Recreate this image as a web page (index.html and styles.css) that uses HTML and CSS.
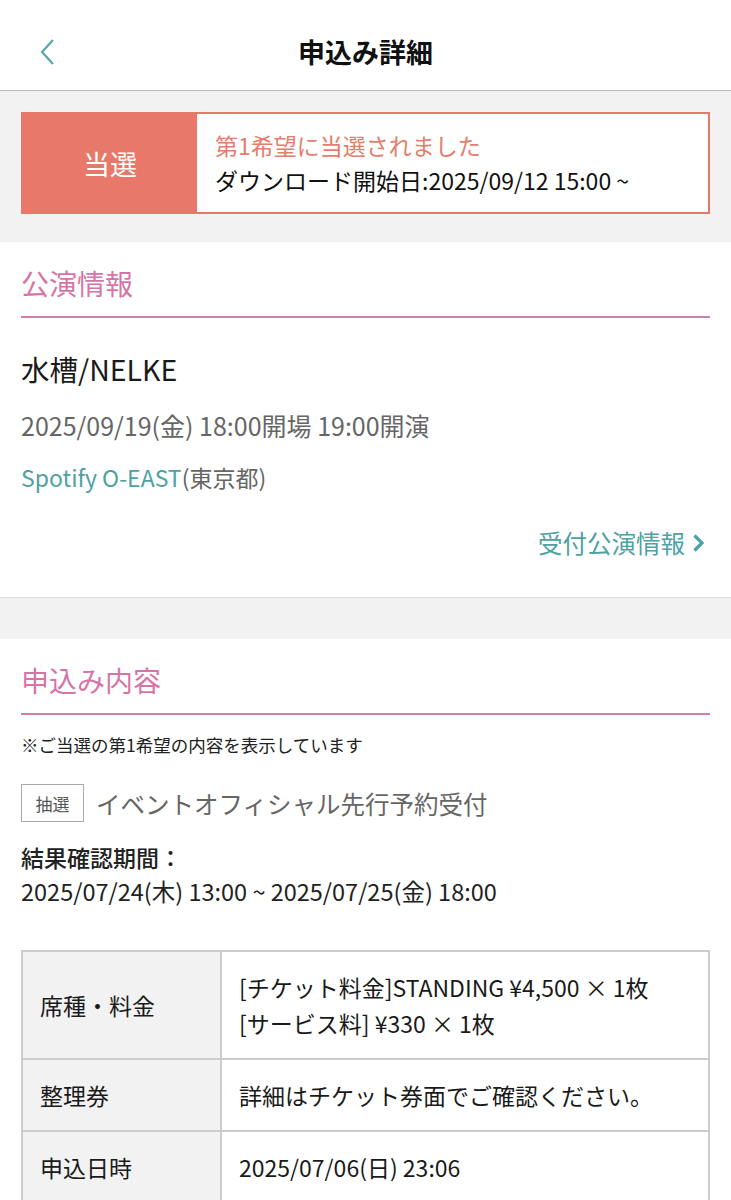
FILE: index.html
```html
<!DOCTYPE html>
<html lang="ja">
<head>
  <meta charset="UTF-8">
  <meta name="viewport" content="width=device-width, initial-scale=1.0">
  <title>申込み詳細</title>
  <link rel="stylesheet" href="styles.css">
</head>
<body>
  <header class="topbar">
    <a class="back" href="#">
      <svg width="18" height="28" viewBox="0 0 18 28"><path d="M15 2 L4 14 L15 26" fill="none" stroke="#5aa5a8" stroke-width="2.2"/></svg>
    </a>
    <h1>申込み詳細</h1>
  </header>

  <div class="status-wrap">
    <div class="status">
      <div class="status-badge">当選</div>
      <div class="status-body">
        <div class="status-title">第1希望に当選されました</div>
        <div class="status-date">ダウンロード開始日:2025/09/12 15:00 ~</div>
      </div>
    </div>
  </div>

  <section class="panel">
    <h2 class="panel-title">公演情報</h2>
    <div class="show-name">水槽/NELKE</div>
    <div class="show-date">2025/09/19(金) 18:00開場 19:00開演</div>
    <div class="show-venue"><span class="venue-name">Spotify O-EAST</span>(東京都)</div>
    <div class="more-row">
      <a class="more-link" href="#">受付公演情報
        <svg width="16" height="22" viewBox="0 0 16 22"><path d="M4.5 3.5 L12 11 L4.5 18.5" fill="none" stroke="#4ea1a4" stroke-width="3.2"/></svg>
      </a>
    </div>
  </section>

  <section class="panel panel-last">
    <h2 class="panel-title">申込み内容</h2>
    <div class="note">※ご当選の第1希望の内容を表示しています</div>
    <div class="entry-row">
      <span class="tag">抽選</span>
      <span class="entry-name">イベントオフィシャル先行予約受付</span>
    </div>
    <div class="period-label">結果確認期間：</div>
    <div class="period">2025/07/24(木) 13:00 ~ 2025/07/25(金) 18:00</div>

    <table class="detail">
      <tr>
        <th>席種・料金</th>
        <td>[チケット料金]STANDING ¥4,500 × 1枚<br>[サービス料] ¥330 × 1枚</td>
      </tr>
      <tr>
        <th>整理券</th>
        <td>詳細はチケット券面でご確認ください。</td>
      </tr>
      <tr>
        <th>申込日時</th>
        <td>2025/07/06(日) 23:06</td>
      </tr>
    </table>
  </section>
</body>
</html>
```

FILE: styles.css
```css
body {
  margin: 0;
  background: #f2f2f2;
  font-family: "Noto Sans CJK JP", "Noto Sans", sans-serif;
  color: #222;
}
.topbar {
  background: #fff;
  height: 90px;
  border-bottom: 1px solid #bdbdbd;
  display: flex;
  align-items: center;
  justify-content: center;
  position: relative;
}
.topbar h1 {
  margin: 0;
  font-size: 27px;
  font-weight: 700;
  color: #111;
  padding-top: 12px;
}
.back {
  position: absolute;
  left: 38px;
  top: 38px;
  display: block;
}
.status-wrap {
  padding: 21px 21px 28px;
}
.status {
  display: flex;
  height: 102px;
  border: 2px solid #e8796a;
  box-sizing: border-box;
  background: #fff;
}
.status-badge {
  width: 174px;
  background: #e8796a;
  color: #fff;
  font-size: 27px;
  display: flex;
  align-items: center;
  justify-content: center;
}
.status-body {
  padding: 14px 18px 0;
  font-size: 23px;
  line-height: 35px;
}
.status-title {
  color: #e37d6c;
}
.status-date {
  color: #111;
}
.panel {
  background: #fff;
  padding: 21px 21px 0;
  border-bottom: 1px solid #dcdcdc;
  margin-bottom: 41px;
}
.panel-title {
  margin: 0;
  font-size: 28px;
  font-weight: 400;
  color: #d774a6;
  line-height: 40px;
  padding-bottom: 13px;
  border-bottom: 2px solid #d27fa8;
}
.show-name {
  font-size: 28.5px;
  margin-top: 31px;
  line-height: 40px;
  color: #1a1a1a;
}
.show-date {
  font-size: 25px;
  color: #666;
  margin-top: 18px;
  line-height: 36px;
}
.show-venue {
  font-size: 23px;
  color: #666;
  margin-top: 17px;
  line-height: 34px;
}
.venue-name {
  color: #4ea1a4;
}
.more-row {
  display: flex;
  justify-content: flex-end;
  padding: 31px 4px 36px 0;
}
.more-link {
  color: #4ea1a4;
  text-decoration: none;
  font-size: 24.5px;
  line-height: 36px;
  display: flex;
  align-items: center;
  gap: 5px;
}
.panel-last {
  border-bottom: none;
  margin-bottom: 0;
  padding-bottom: 40px;
}
.note {
  font-size: 17.5px;
  color: #222;
  margin-top: 17px;
  line-height: 26px;
}
.entry-row {
  display: flex;
  align-items: center;
  gap: 12px;
  margin-top: 26px;
}
.tag {
  border: 1px solid #aaa;
  color: #555;
  font-size: 17px;
  width: 63px;
  height: 38px;
  box-sizing: border-box;
  display: flex;
  align-items: center;
  justify-content: center;
}
.entry-name {
  font-size: 24.5px;
  color: #666;
}
.period-label {
  font-size: 23px;
  font-weight: 500;
  margin-top: 18px;
  line-height: 34px;
}
.period {
  font-size: 23.5px;
  line-height: 34px;
}
.detail {
  width: 100%;
  margin-top: 42px;
  border-collapse: collapse;
  font-size: 23px;
}
.detail th,
.detail td {
  border: 2px solid #cccccc;
  text-align: left;
  font-weight: 400;
  line-height: 36px;
  color: #1a1a1a;
  padding: 17px 17px;
}
.detail th {
  background: #f2f2f2;
  width: 163px;
}
```
